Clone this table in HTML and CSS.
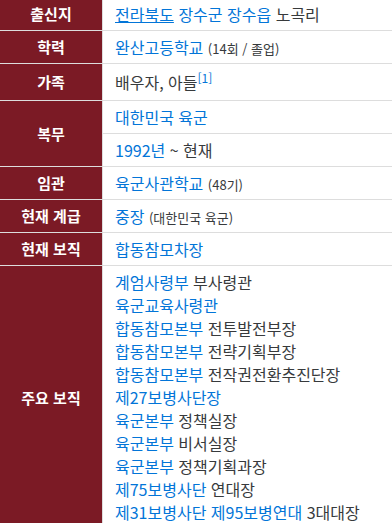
FILE: index.html
```html
<!DOCTYPE html>
<html lang="ko">
<head>
<meta charset="utf-8">
<link rel="stylesheet" href="styles.css">
</head>
<body>
<table class="info">
  <tr>
    <th>출신지</th>
    <td><a class="u" href="#">전라북도</a> <a href="#">장수군</a> <a href="#">장수읍</a> 노곡리</td>
  </tr>
  <tr>
    <th>학력</th>
    <td><a href="#">완산고등학교</a> <span class="small">(14회 / 졸업)</span></td>
  </tr>
  <tr>
    <th>가족</th>
    <td class="tall">배우자, 아들<sup class="fn"><a href="#">[1]</a></sup></td>
  </tr>
  <tr>
    <th rowspan="2">복무</th>
    <td><a href="#">대한민국 육군</a></td>
  </tr>
  <tr>
    <td><a href="#">1992년</a> ~ 현재</td>
  </tr>
  <tr>
    <th>임관</th>
    <td><a href="#">육군사관학교</a> <span class="small">(48기)</span></td>
  </tr>
  <tr>
    <th>현재 계급</th>
    <td><a href="#">중장</a> <span class="small">(대한민국 육군)</span></td>
  </tr>
  <tr>
    <th>현재 보직</th>
    <td><a href="#">합동참모차장</a></td>
  </tr>
  <tr>
    <th>주요 보직</th>
    <td>
      <div class="item"><a href="#">계엄사령부</a> 부사령관</div>
      <div class="item"><a href="#">육군교육사령관</a></div>
      <div class="item"><a href="#">합동참모본부</a> 전투발전부장</div>
      <div class="item"><a href="#">합동참모본부</a> 전략기획부장</div>
      <div class="item"><a href="#">합동참모본부</a> 전작권전환추진단장</div>
      <div class="item"><a href="#">제27보병사단장</a></div>
      <div class="item"><a href="#">육군본부</a> 정책실장</div>
      <div class="item"><a href="#">육군본부</a> 비서실장</div>
      <div class="item"><a href="#">육군본부</a> 정책기획과장</div>
      <div class="item"><a href="#">제75보병사단</a> 연대장</div>
      <div class="item"><a href="#">제31보병사단</a> <a href="#">제95보병연대</a> 3대대장</div>
    </td>
  </tr>
</table>
</body>
</html>
```
FILE: styles.css
```css
html, body {
  margin: 0;
  padding: 0;
  background: #fff;
}
body {
  font-family: "Noto Sans CJK KR", "Noto Sans", sans-serif;
  font-size: 16px;
  color: #373a3c;
  overflow: hidden;
}
.info {
  width: 392px;
  border-collapse: collapse;
  margin-top: -3px;
}
.info th,
.info td {
  border: 1px solid #dddddd;
  line-height: 20px;
  height: 22px;
  padding: 5px 0;
  box-sizing: content-box;
}
.info th {
  width: 102px;
  background: #7b1a25;
  color: #fff;
  font-size: 15px;
  font-weight: bold;
  text-align: center;
  vertical-align: middle;
  border-left: none;
}
.info td {
  padding-left: 12px;
  padding-right: 4px;
  text-align: left;
  vertical-align: middle;
  border-right: none;
}
.info td.tall {
  padding-top: 7px;
  padding-bottom: 7px;
}
.info td a,
.info td .small,
.info td .fn {
  line-height: 1;
}
.info .item {
  height: 23px;
  line-height: 23px;
  overflow: hidden;
}
.info a {
  color: #0275d8;
  text-decoration: none;
}
.info a.u {
  text-decoration: underline;
}
.small {
  font-size: 13px;
}
.fn {
  font-size: 12px;
  vertical-align: 6px;
}
```
